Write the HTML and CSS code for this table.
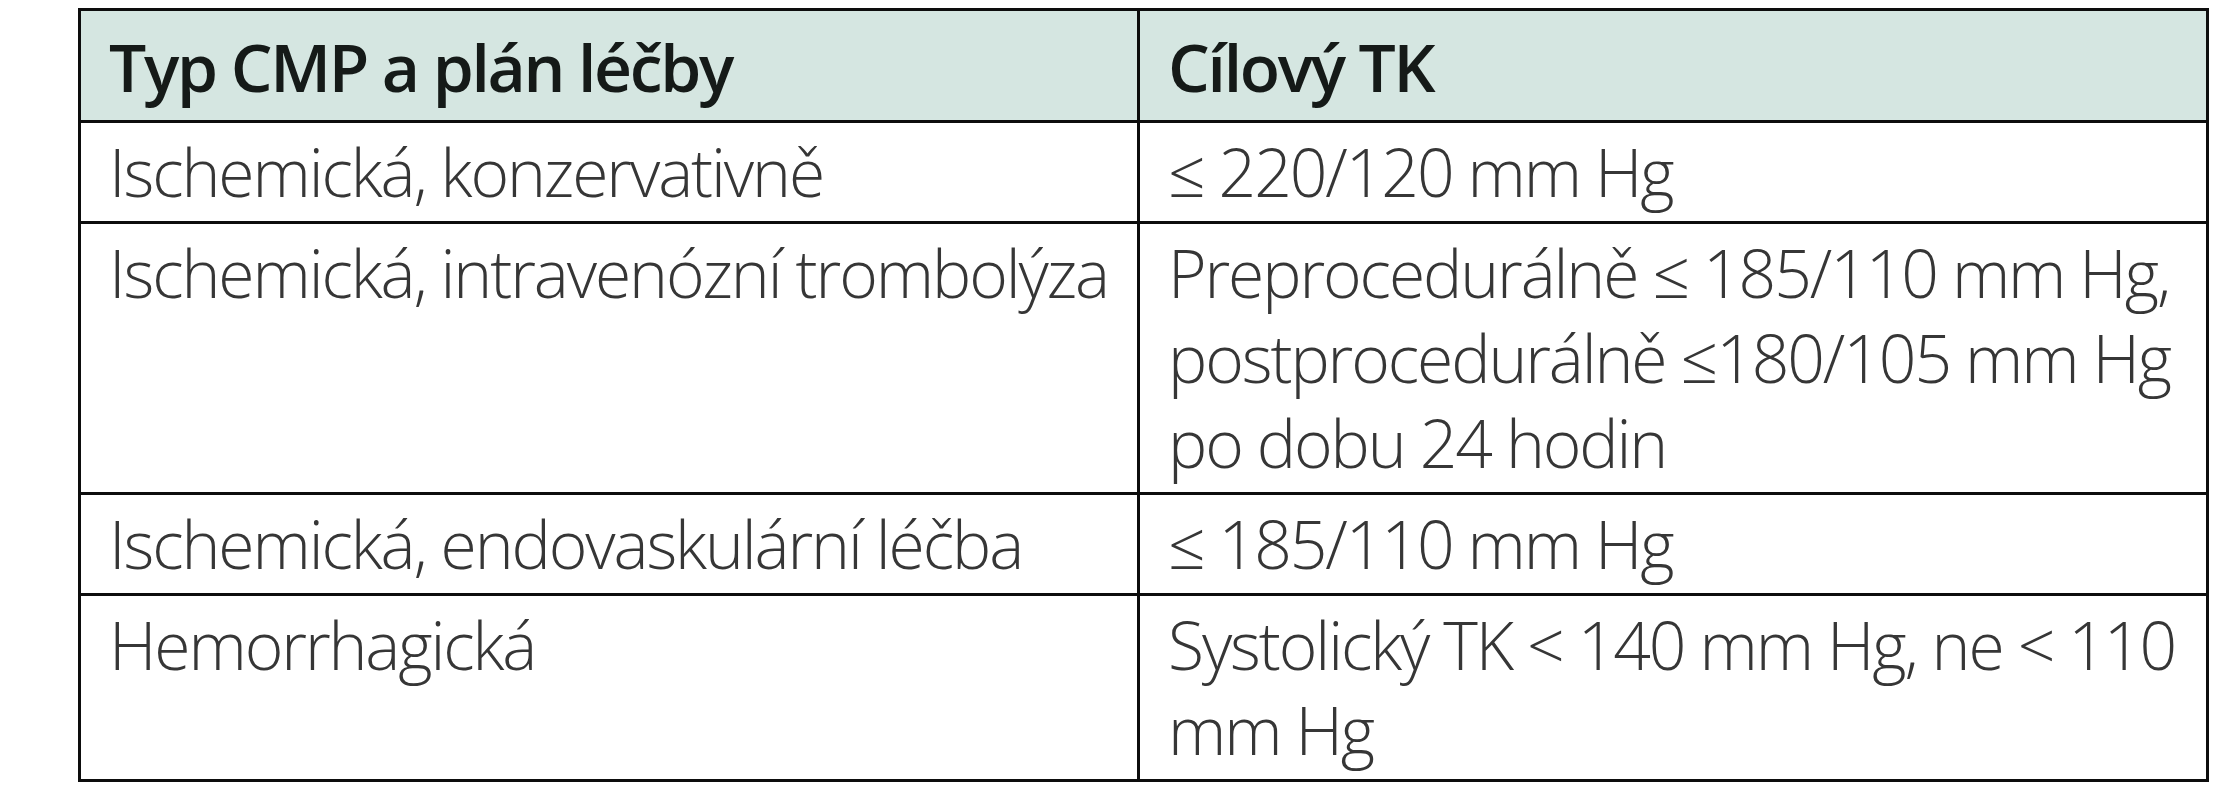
FILE: index.html
```html
<!DOCTYPE html>
<html lang="cs">
<head>
<meta charset="utf-8">
<title>Cílový TK</title>
<link rel="stylesheet" href="styles.css">
</head>
<body>
<div class="page">
  <table class="bp-table">
    <thead>
      <tr>
        <th class="col-type">Typ CMP a plán léčby</th>
        <th class="col-target">Cílový TK</th>
      </tr>
    </thead>
    <tbody>
      <tr>
        <td>Ischemická, konzervativně</td>
        <td>≤ 220/120 mm Hg</td>
      </tr>
      <tr>
        <td>Ischemická, intravenózní trombolýza</td>
        <td>Preprocedurálně ≤ 185/110 mm Hg,<br>postprocedurálně ≤180/105 mm Hg<br>po dobu 24 hodin</td>
      </tr>
      <tr>
        <td>Ischemická, endovaskulární léčba</td>
        <td>≤ 185/110 mm Hg</td>
      </tr>
      <tr>
        <td>Hemorrhagická</td>
        <td>Systolický TK &lt; 140 mm Hg, ne &lt; 110<br>mm Hg</td>
      </tr>
    </tbody>
  </table>
</div>
</body>
</html>
```

FILE: styles.css
```css
html, body {
  margin: 0;
  padding: 0;
  background: #ffffff;
}

.page {
  padding: 8px 0 0 78px;
}

.bp-table {
  border-collapse: collapse;
  width: 2131px;
  table-layout: fixed;
  font-family: "Open Sans", "Liberation Sans", sans-serif;
  font-size: 66px;
  line-height: 85px;
  color: #363636;
}

.col-type {
  width: 1018px;
}

.bp-table th,
.bp-table td {
  border: 3px solid #0d0d0d;
  text-align: left;
  vertical-align: top;
  padding: 6px 10px 7px 28px;
  font-weight: 300;
  letter-spacing: -2.1px;
  white-space: nowrap;
}

.bp-table th {
  background: #d5e6e1;
  color: #151a18;
  font-weight: 600;
  padding-top: 13px;
  padding-bottom: 11px;
  letter-spacing: -2.3px;
}
```
